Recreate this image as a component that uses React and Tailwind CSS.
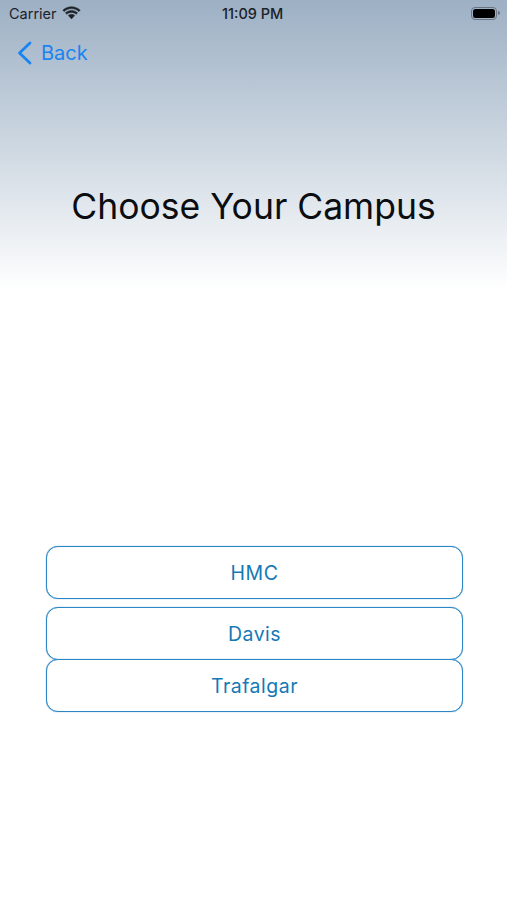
import React from 'react'

const campuses = [
  { name: 'HMC', margin: 'mt-0' },
  { name: 'Davis', margin: 'mt-2' },
  { name: 'Trafalgar', margin: '-mt-px' },
]

function StatusBar() {
  return (
    <div className="flex h-[28px] items-center pl-[9px] pr-[7px] text-[#1c2228]">
      <div className="flex w-[213px] items-center gap-[5px]">
        <span className="text-[14.5px] leading-none">Carrier</span>
        <svg width="19" height="14" viewBox="0 0 19 14" fill="currentColor" stroke="currentColor" strokeWidth="0.5" className="-mt-[2px]">
          <path d="M9.5 2.6c2.8 0 5.4 1.1 7.4 3l1.3-1.4C15.9 2 12.8.7 9.5.7S3.1 2 .8 4.2l1.3 1.4c2-1.9 4.6-3 7.4-3z" />
          <path d="M9.5 6.4c1.8 0 3.4.7 4.7 1.8l1.4-1.4C14 5.3 11.8 4.4 9.5 4.4s-4.5.9-6.1 2.4l1.4 1.4c1.3-1.1 2.9-1.8 4.7-1.8z" />
          <path d="M9.5 8.3c-1.2 0-2.3.5-3.2 1.2l3.2 3.4 3.2-3.4c-.9-.7-2-1.2-3.2-1.2z" />
        </svg>
      </div>
      <span className="text-[14.5px] font-medium leading-none">11:09 PM</span>
      <div className="ml-auto -mt-[2px] flex items-center">
        <div className="flex h-[13px] w-[26px] items-center rounded-[4px] border border-[#6b7480] p-[1px]">
          <div className="h-full w-full rounded-[2.5px] bg-black" />
        </div>
        <div className="ml-[1px] h-[4px] w-[2px] rounded-r-sm bg-[#6b7480]" />
      </div>
    </div>
  )
}

export default function App() {
  return (
    <div className="h-[900px] w-[507px] overflow-hidden bg-white font-['Inter',sans-serif]">
      <div className="h-[290px] bg-gradient-to-b from-[#9db0c4] via-[#cdd7e1] via-50% to-white">
        <StatusBar />
        <button className="mt-[12px] flex items-center gap-[9px] pl-[17px] text-[#1a84f0]">
          <svg width="15" height="24" viewBox="0 0 15 24" fill="none" stroke="currentColor" strokeWidth="2.8" strokeLinecap="round" strokeLinejoin="round">
            <path d="M13 2 2.5 12 13 22" />
          </svg>
          <span className="text-[20px] leading-[26px]">Back</span>
        </button>
        <h1 className="mt-[118px] text-center text-[35.5px] leading-[46px] text-[#0b0d10]">Choose Your Campus</h1>
      </div>
      <div className="mt-[256px] flex flex-col pl-[46px] pr-[44px]">
        {campuses.map((c) => (
          <button
            key={c.name}
            className={`flex h-[53px] items-center justify-center rounded-[12px] border border-[#2c86c4] bg-white pt-[2px] text-[19.5px] tracking-[0.5px] text-[#1579b5] shadow-[0_0_1px_#2c86c4] ${c.margin}`}
          >
            {c.name}
          </button>
        ))}
      </div>
    </div>
  )
}
